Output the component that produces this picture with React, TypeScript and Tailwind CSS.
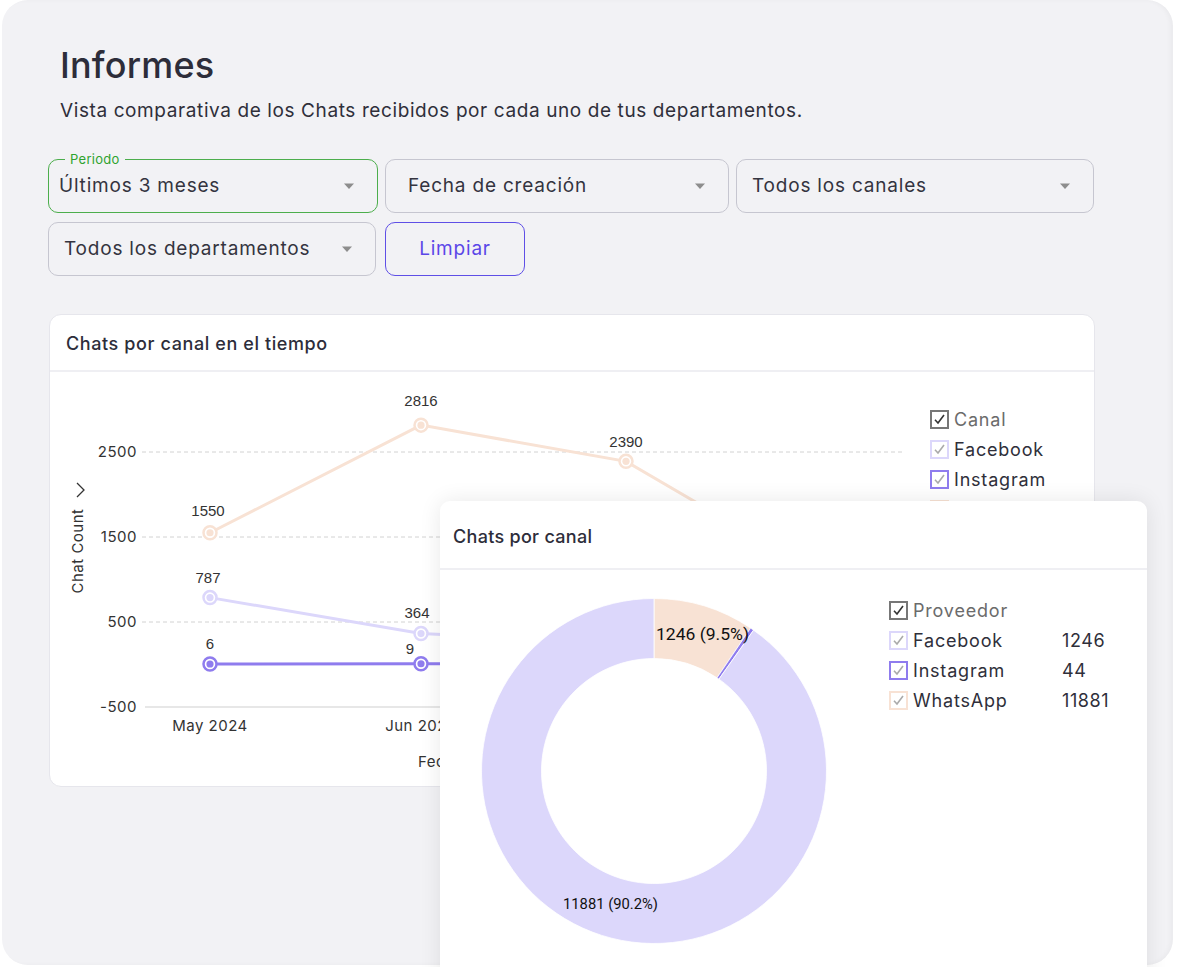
import React from 'react';

const LAVENDER = '#dcd7fb';
const PEACH = '#f8e2d4';
const PURPLE = '#8f7cee';

const Caret: React.FC = () => (
    <svg width="12" height="8" viewBox="0 0 12 8" className="shrink-0">
        <path d="M1 1.5 L11 1.5 L6 7 Z" fill="#8d8d8d" />
    </svg>
);

const Select: React.FC<{ label: string; width: string; pad: string; floating?: string }> = ({ label, width, pad, floating }) => (
    <div
        className={`relative h-[54px] ${width} ${pad} pr-[22px] flex items-center justify-between rounded-[10px] border ${floating ? 'border-[#4cae4c]' : 'border-[#c6c6d0]'}`}
    >
        {floating && (
            <span className="absolute -top-[9px] left-[16px] px-[5px] bg-[#f2f2f5] text-[13px] leading-[16px] tracking-[0.3px] text-[#2fa32f]">
                {floating}
            </span>
        )}
        <span className="text-[19px] tracking-[0.8px] text-[#34343f]">{label}</span>
        <Caret />
    </div>
);

const Check: React.FC<{ border: string; tick: string }> = ({ border, tick }) => (
    <svg width="19" height="19" viewBox="0 0 19 19" className="shrink-0">
        <rect x="1" y="1" width="17" height="17" fill="white" stroke={border} strokeWidth="2" />
        <path d="M5 9.8 L8 13 L14 5" fill="none" stroke={tick} strokeWidth="1.6" />
    </svg>
);

// ---------- line chart ----------
const py = (v: number) => 292.5 - 0.085 * v;
const X = [160, 371, 576, 781];

const series = [
    { color: PEACH, values: [1550, 2816, 2390, 980] },
    { color: LAVENDER, values: [787, 364, 250, 200] },
    { color: PURPLE, values: [6, 9, 8, 8] },
];

const Marker: React.FC<{ x: number; y: number; color: string }> = ({ x, y, color }) => (
    <g>
        <circle cx={x} cy={y} r="6.5" fill="white" stroke={color} strokeWidth="2.5" />
        <circle cx={x} cy={y} r="3.6" fill={color} />
    </g>
);

const LineChart: React.FC = () => {
    const labelPos: [number, number, string][] = [
        [158, 139, '1550'],
        [371, 29, '2816'],
        [576, 70, '2390'],
        [158, 206, '787'],
        [367, 241, '364'],
        [160, 272, '6'],
        [360, 277, '9'],
    ];
    return (
        <svg width="880" height="415" className="shrink-0" style={{ fontFamily: 'Inter, sans-serif' }}>
            {[2500, 1500, 500].map((t) => (
                <line key={t} x1="92" x2="852" y1={py(t)} y2={py(t)} stroke="#d2d2d2" strokeDasharray="4 3" />
            ))}
            <line x1="95" x2="880" y1={py(-500)} y2={py(-500)} stroke="#cfcfcf" />
            {[2500, 1500, 500, -500].map((t) => (
                <text key={t} x="87" y={py(t) + 5} textAnchor="end" fontSize="15" letterSpacing="0.5" fill="#333">
                    {t}
                </text>
            ))}
            {series.map((s) => (
                <polyline
                    key={s.color}
                    points={s.values.map((v, i) => `${X[i]},${py(v)}`).join(' ')}
                    fill="none"
                    stroke={s.color}
                    strokeWidth="3"
                />
            ))}
            {series.map((s) =>
                s.values.slice(0, 3).map((v, i) => <Marker key={s.color + i} x={X[i]} y={py(v)} color={s.color} />)
            )}
            {labelPos.map(([x, y, t]) => (
                <text key={t} x={x} y={y + 5} textAnchor="middle" fontSize="15" fill="#333" fontFamily="'Liberation Sans', Arial, sans-serif">
                    {t}
                </text>
            ))}
            <text x="160" y="359" textAnchor="middle" fontSize="15" letterSpacing="0.5" fill="#333">May 2024</text>
            <text x="371" y="359" textAnchor="middle" fontSize="15" letterSpacing="0.5" fill="#333">Jun 2024</text>
            <text x="368" y="395" fontSize="15" letterSpacing="0.5" fill="#333">Fecha</text>
            <text
                x="0"
                y="0"
                transform="translate(33 179) rotate(-90)"
                textAnchor="middle"
                fontSize="15"
                letterSpacing="0.5"
                fill="#333"
            >
                Chat Count
            </text>
            <polyline points="27,111 34,118 27,125" fill="none" stroke="#333" strokeWidth="1.3" />
        </svg>
    );
};

// ---------- donut ----------
const CX = 214;
const CY = 201;
const R1 = 172.5;
const R0 = 112.5;

const arc = (a0: number, a1: number) => {
    const p = (r: number, a: number) => [CX + r * Math.sin(a), CY - r * Math.cos(a)];
    const large = a1 - a0 > Math.PI ? 1 : 0;
    const [x0, y0] = p(R1, a0);
    const [x1, y1] = p(R1, a1);
    const [x2, y2] = p(R0, a1);
    const [x3, y3] = p(R0, a0);
    return `M${x0} ${y0} A${R1} ${R1} 0 ${large} 1 ${x1} ${y1} L${x2} ${y2} A${R0} ${R0} 0 ${large} 0 ${x3} ${y3} Z`;
};

const Donut: React.FC = () => {
    const data = [
        { v: 1246, c: PEACH },
        { v: 44, c: PURPLE },
        { v: 11881, c: LAVENDER },
    ];
    const total = data.reduce((s, d) => s + d.v, 0);
    let acc = 0;
    return (
        <svg width="440" height="400" className="shrink-0">
            {data.map((d) => {
                const a0 = (acc / total) * Math.PI * 2;
                acc += d.v;
                const a1 = (acc / total) * Math.PI * 2;
                return <path key={d.c} d={arc(a0, a1)} fill={d.c} stroke="white" strokeWidth="0.8" />;
            })}
            <text x="216" y="70" fontSize="17" fill="#111" textLength="93" lengthAdjust="spacingAndGlyphs" fontFamily="Roboto, sans-serif">
                1246 (9.5%)
            </text>
            <text x="123" y="339" fontSize="15" fill="#111" textLength="95" lengthAdjust="spacingAndGlyphs" fontFamily="Roboto, sans-serif">
                11881 (90.2%)
            </text>
        </svg>
    );
};

const LegendRow: React.FC<{ border: string; tick: string; label: string; value?: string; muted?: boolean }> = ({
    border,
    tick,
    label,
    value,
    muted,
}) => (
    <div className="h-[30px] flex items-center">
        <Check border={border} tick={tick} />
        <span className={`ml-[5px] text-[18px] tracking-[0.8px] ${muted ? 'text-[#6b6b6b]' : 'text-[#2f2f3a]'} w-[149px]`}>{label}</span>
        {value && <span className="text-[18px] tracking-[0.6px] text-[#2f2f3a]">{value}</span>}
    </div>
);

export default function App() {
    return (
        <div className="w-[1177px] h-[967px] bg-white overflow-hidden" style={{ fontFamily: "Inter, 'Noto Sans', sans-serif" }}>
            <div className="relative ml-[2px] w-[1171px] h-[965px] rounded-[26px] bg-[#f2f2f5] shadow-[inset_-3px_0_4px_rgba(0,0,0,0.03)] pt-[44px]">
                <h1 className="ml-[58px] text-[36px] leading-[42px] font-medium tracking-[0.2px] text-[#2d2d3a]">Informes</h1>
                <p className="ml-[58px] mt-[12px] text-[19px] leading-[26px] tracking-[0.6px] text-[#2f2f3a]">
                    Vista comparativa de los Chats recibidos por cada uno de tus departamentos.
                </p>

                <div className="ml-[46px] mt-[35px] flex flex-col gap-[9px]">
                    <div className="flex gap-[7px]">
                        <Select label="Últimos 3 meses" width="w-[330px]" pad="pl-[10px]" floating="Periodo" />
                        <Select label="Fecha de creación" width="w-[344px]" pad="pl-[22px]" />
                        <Select label="Todos los canales" width="w-[358px]" pad="pl-[15px]" />
                    </div>
                    <div className="flex gap-[9px]">
                        <Select label="Todos los departamentos" width="w-[328px]" pad="pl-[15px]" />
                        <button className="h-[54px] w-[140px] rounded-[10px] border border-[#5f4fe6] text-[19px] tracking-[0.8px] text-[#5b47e8]">
                            Limpiar
                        </button>
                    </div>
                </div>

                <div className="ml-[47px] mt-[38px] w-[1046px] h-[473px] rounded-[12px] bg-white border border-[#e6e6ec] overflow-hidden">
                    <div className="h-[57px] flex items-center px-[16px] border-b-2 border-[#efeff3]">
                        <span className="mt-[2px] text-[18px] font-medium tracking-[0.6px] text-[#2d2d3a]">Chats por canal en el tiempo</span>
                    </div>
                    <div className="flex">
                        <LineChart />
                        <div className="pt-[32px] flex flex-col">
                            <LegendRow border="#777" tick="#333" label="Canal" muted />
                            <LegendRow border={LAVENDER} tick="#aaa" label="Facebook" />
                            <LegendRow border={PURPLE} tick="#aaa" label="Instagram" />
                            <LegendRow border={PEACH} tick="#aaa" label="WhatsApp" />
                        </div>
                    </div>
                </div>

                <div className="absolute left-[438px] top-[501px] w-[707px] h-[500px] rounded-[10px] bg-white shadow-[0_0_22px_rgba(0,0,0,0.09)]">
                    <div className="h-[69px] flex items-center px-[13px] border-b-2 border-[#efeff3]">
                        <span className="mt-[3px] text-[18px] font-medium tracking-[0.3px] text-[#2d2d3a]">Chats por canal</span>
                    </div>
                    <div className="flex">
                        <Donut />
                        <div className="ml-[9px] pt-[25px] flex flex-col">
                            <LegendRow border="#777" tick="#333" label="Proveedor" muted />
                            <LegendRow border={LAVENDER} tick="#aaa" label="Facebook" value="1246" />
                            <LegendRow border={PURPLE} tick="#aaa" label="Instagram" value="44" />
                            <LegendRow border={PEACH} tick="#aaa" label="WhatsApp" value="11881" />
                        </div>
                    </div>
                </div>
            </div>
        </div>
    );
}
